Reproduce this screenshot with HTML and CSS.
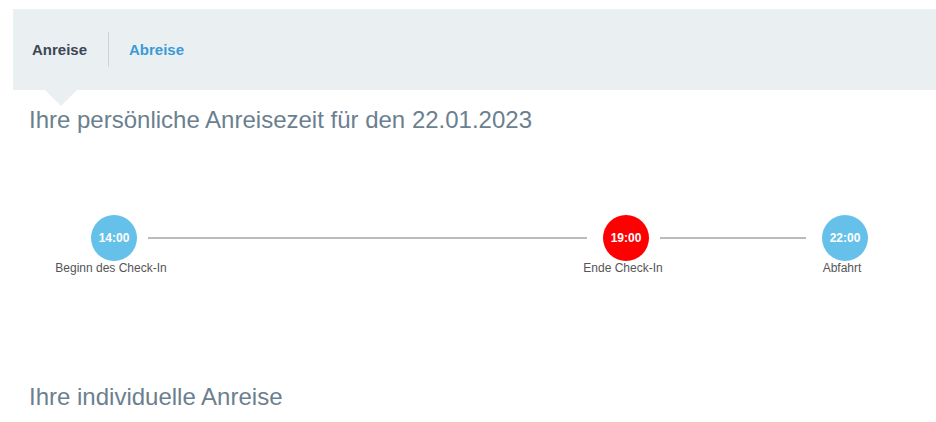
FILE: index.html
```html
<!DOCTYPE html>
<html lang="de">
<head>
<meta charset="utf-8">
<title>Anreise</title>
<link rel="stylesheet" href="styles.css">
</head>
<body>
<div class="page">
  <nav class="tabbar">
    <a class="tab tab-active">Anreise</a>
    <a class="tab tab-link">Abreise</a>
  </nav>
  <h2 class="heading heading-first">Ihre persönliche Anreisezeit für den 22.01.2023</h2>
  <div class="timeline">
    <div class="node">
      <div class="dot dot-blue">14:00</div>
      <div class="label">Beginn des Check-In</div>
    </div>
    <div class="line line-long"></div>
    <div class="node">
      <div class="dot dot-red">19:00</div>
      <div class="label">Ende Check-In</div>
    </div>
    <div class="line line-short"></div>
    <div class="node">
      <div class="dot dot-blue">22:00</div>
      <div class="label">Abfahrt</div>
    </div>
  </div>
  <h2 class="heading heading-second">Ihre individuelle Anreise</h2>
</div>
</body>
</html>
```
FILE: styles.css
```css
html, body {
  margin: 0;
  padding: 0;
  background: #ffffff;
}
body {
  font-family: "Liberation Sans", Arial, Helvetica, sans-serif;
}
.page {
  padding: 9px 0 0 13px;
}
.tabbar {
  position: relative;
  height: 81px;
  background: #eaeff2;
  display: flex;
  align-items: center;
}
.tabbar::after {
  content: "";
  position: absolute;
  left: 32px;
  top: 100%;
  width: 0;
  height: 0;
  border-left: 16px solid transparent;
  border-right: 16px solid transparent;
  border-top: 16px solid #eaeff2;
}
.tab {
  display: block;
  height: 35px;
  line-height: 35px;
  font-size: 15px;
  font-weight: bold;
  text-decoration: none;
}
.tab-active {
  color: #3b4754;
  padding: 0 21px 0 19px;
}
.tab-link {
  color: #3a9bd5;
  padding: 0 20px;
  border-left: 1px solid #cfd4d8;
}
.heading {
  margin: 0;
  padding-left: 16px;
  font-size: 24px;
  line-height: 28px;
  font-weight: normal;
  color: #6b7f8f;
}
.heading-first {
  margin-top: 16px;
}
.timeline {
  display: flex;
  align-items: flex-start;
  margin-top: 81px;
  padding-left: 78px;
}
.node {
  width: 46px;
  display: flex;
  flex-direction: column;
  align-items: center;
}
.dot {
  width: 46px;
  height: 46px;
  border-radius: 50%;
  color: #ffffff;
  font-size: 12px;
  font-weight: bold;
  line-height: 46px;
  text-align: center;
}
.dot-blue {
  background: #66c1ea;
}
.dot-red {
  background: #ff0000;
}
.label {
  margin: 0 6px 0 0;
  white-space: nowrap;
  font-size: 12px;
  line-height: 14px;
  color: #555555;
}
.line {
  height: 2px;
  margin-top: 22px;
  background: #bbbbbb;
}
.line-long {
  width: 439px;
  margin-left: 11px;
  margin-right: 16px;
}
.line-short {
  width: 146px;
  margin-left: 11px;
  margin-right: 16px;
}
.heading-second {
  margin-top: 108px;
}
```
